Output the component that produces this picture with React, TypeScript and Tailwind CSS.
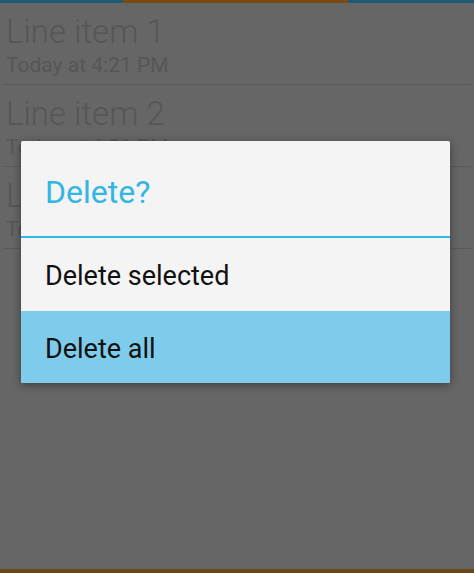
const items = [
  { title: 'Line item 1', time: 'Today at 4:21 PM' },
  { title: 'Line item 2', time: 'Today at 4:21 PM' },
  { title: 'Line item 3', time: 'Today at 4:21 PM' },
];

export default function App() {
  return (
    <div className="relative flex h-[573px] w-full flex-col overflow-hidden bg-[#666666] font-['Roboto',sans-serif]">
      {/* tab indicator strip, dimmed by the dialog scrim */}
      <div className="flex h-[3px] w-full">
        <div className="w-[123px] bg-[#1c5a74]" />
        <div className="w-[225px] bg-[#7a4a12]" />
        <div className="flex-1 bg-[#1c5a74]" />
      </div>

      <ul className="mx-[3px]">
        {items.map((item) => (
          <li
            key={item.title}
            className="flex h-[82px] flex-col border-b border-[#595959] pl-[3px] pt-[10px] text-[#565656]"
          >
            <span className="text-[33px] font-light leading-[37px]">{item.title}</span>
            <span className="mt-[3px] text-[21px] leading-[25px]">{item.time}</span>
          </li>
        ))}
      </ul>

      <div className="flex-1" />
      <div className="h-[4px] w-full bg-[#6a4814]" />

      {/* dialog */}
      <div className="absolute left-[21px] top-[141px] w-[429px] overflow-hidden rounded-[2px] bg-[#f4f4f4] shadow-[0_2px_10px_rgba(0,0,0,0.4)]">
        <div className="h-[97px] border-b-2 border-[#33b5e5] pl-[24px] pt-[33px]">
          <h2 className="text-[32px] font-normal leading-[36px] text-[#33b5e5]">Delete?</h2>
        </div>
        <button className="flex h-[73px] w-full items-center pl-[24px] pt-[3px] text-left text-[27px] leading-[30px] text-[#111111]">
          Delete selected
        </button>
        <button className="flex h-[72px] w-full items-center bg-[#7ecbeb] pl-[24px] pt-[3px] text-left text-[27px] leading-[30px] text-[#111111]">
          Delete all
        </button>
      </div>
    </div>
  );
}
